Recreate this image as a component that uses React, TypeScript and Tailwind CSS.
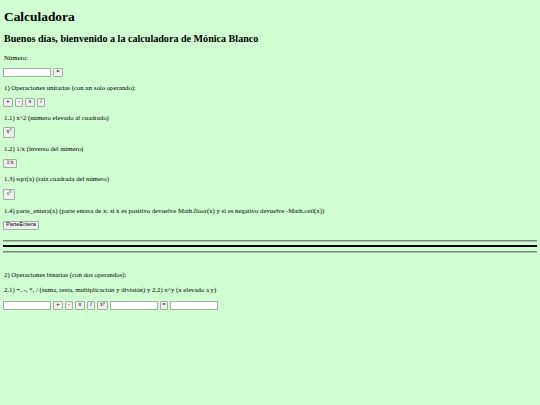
import React from "react";

const serif = { fontFamily: '"Liberation Serif", "Times New Roman", serif' };

function Btn({ w, h = 9, children }: { w: number; h?: number; children: React.ReactNode }) {
  return (
    <button
      className="flex items-center justify-center border border-[#a3aca3] bg-[#efefef] rounded-[1px] text-[5.6px] leading-none text-black p-0 shrink-0"
      style={{ width: w, height: h, fontFamily: '"Liberation Sans", Arial, sans-serif' }}
    >
      {children}
    </button>
  );
}

function Inp() {
  return <input className="w-[48px] h-[9px] border border-[#a3aca3] bg-white shrink-0 outline-none" />;
}

function P({ className = "", children }: { className?: string; children: React.ReactNode }) {
  return <p className={`text-[6.75px] leading-[9px] pl-[1px] ${className}`}>{children}</p>;
}

export default function App() {
  return (
    <div className="min-h-[405px] w-[540px] bg-[#d0ffd2] text-black px-[3px] pt-[9px] pb-[20px]" style={serif}>
      <h1 className="text-[13.4px] font-bold leading-[15px] pl-[1px]">Calculadora</h1>
      <h2 className="mt-[9px] text-[10.1px] font-bold leading-[11.5px] pl-[1px]">
        Buenos días, bienvenido a la calculadora de Mónica Blanco
      </h2>
      <P className="mt-[8px]">Número:</P>
      <div className="mt-[6px] flex gap-[2px]">
        <Inp />
        <Btn w={10}>=</Btn>
      </div>
      <P className="mt-[6px]">1) Operaciones unitarias (con un solo operando):</P>
      <div className="mt-[6px] flex gap-[2px]">
        <Btn w={10}>+</Btn>
        <Btn w={8}>-</Btn>
        <Btn w={10}>x</Btn>
        <Btn w={8}>/</Btn>
      </div>
      <P className="mt-[6px]">1.1) x^2 (número elevado al cuadrado)</P>
      <div className="mt-[5px] flex">
        <Btn w={12} h={11}>
          <span style={serif}>
            x<sup className="text-[4px] relative -top-[2px] align-baseline">2</sup>
          </span>
        </Btn>
      </div>
      <P className="mt-[6px]">1.2) 1/x (inverso del número)</P>
      <div className="mt-[6px] flex">
        <Btn w={14}>
          <span style={serif}>1/x</span>
        </Btn>
      </div>
      <P className="mt-[6px]">1.3) sqrt(x) (raíz cuadrada del número)</P>
      <div className="mt-[6px] flex">
        <Btn w={12} h={11}>
          <span style={serif}>
            √<sup className="text-[4px] relative -top-[2px] align-baseline">2</sup>
          </span>
        </Btn>
      </div>
      <P className="mt-[6px]">
        1.4) parte_entera(x) (parte entera de x: si x es positivo devuelve Math.floor(x) y si es negativo devuelve -Math.ceil(x))
      </P>
      <div className="mt-[6px] flex">
        <Btn w={36}>ParteEntera</Btn>
      </div>
      <div className="mt-[10px] h-[2px] bg-[#7f8a7f] border-b border-[#a8b8a8]" />
      <div className="mt-[3px] h-[2px] bg-black" />
      <div className="mt-[4px] h-[2px] bg-[#7f8a7f] border-b border-[#a8b8a8]" />
      <P className="mt-[17px]">2) Operaciones binarias (con dos operandos):</P>
      <P className="mt-[6px]">
        2.1) +, -, *, / (suma, resta, multiplicación y división) y 2.2) x^y (x elevado a y)
      </P>
      <div className="mt-[7px] flex gap-[2px]">
        <Inp />
        <Btn w={10}>+</Btn>
        <Btn w={8}>-</Btn>
        <Btn w={10}>x</Btn>
        <Btn w={8}>/</Btn>
        <Btn w={11}>
          <span style={serif}>
            x<sup className="text-[4px] relative -top-[2px] align-baseline">y</sup>
          </span>
        </Btn>
        <Inp />
        <Btn w={8}>=</Btn>
        <Inp />
      </div>
    </div>
  );
}
